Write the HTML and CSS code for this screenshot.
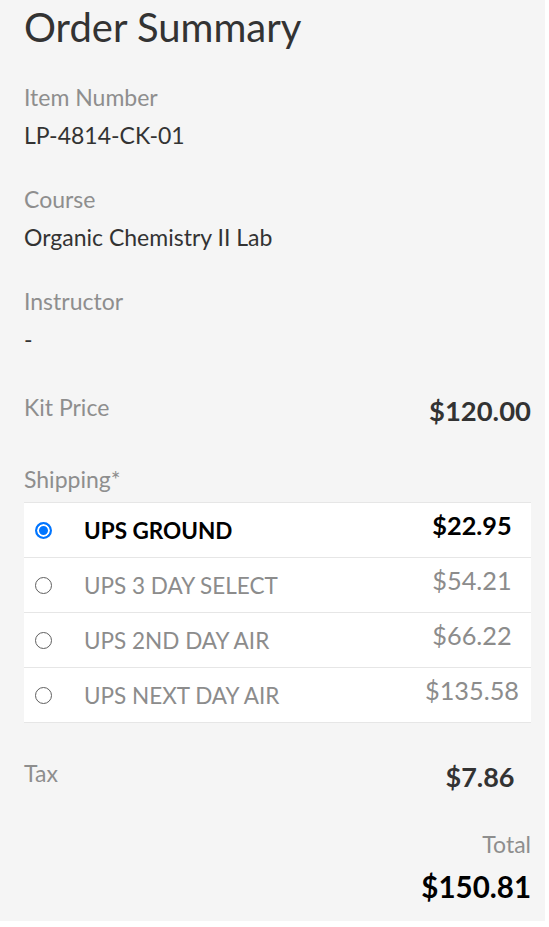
FILE: index.html
```html
<!DOCTYPE html>
<html>
<head>
<meta charset="utf-8">
<link rel="stylesheet" href="styles.css">
</head>
<body>
<div class="panel">
  <h1 class="title">Order Summary</h1>

  <div class="field first">
    <div class="label">Item Number</div>
    <div class="value">LP-4814-CK-01</div>
  </div>
  <div class="field">
    <div class="label">Course</div>
    <div class="value">Organic Chemistry II Lab</div>
  </div>
  <div class="field">
    <div class="label">Instructor</div>
    <div class="value">-</div>
  </div>

  <div class="line kit">
    <div class="label">Kit Price</div>
    <div class="amount">$120.00</div>
  </div>

  <div class="label shipping-label">Shipping*</div>
  <div class="options">
    <label class="option selected">
      <input type="radio" name="ship" checked>
      <span class="opt-name">UPS GROUND</span>
      <span class="opt-price">$22.95</span>
    </label>
    <label class="option">
      <input type="radio" name="ship">
      <span class="opt-name">UPS 3 DAY SELECT</span>
      <span class="opt-price">$54.21</span>
    </label>
    <label class="option">
      <input type="radio" name="ship">
      <span class="opt-name">UPS 2ND DAY AIR</span>
      <span class="opt-price">$66.22</span>
    </label>
    <label class="option">
      <input type="radio" name="ship">
      <span class="opt-name">UPS NEXT DAY AIR</span>
      <span class="opt-price">$135.58</span>
    </label>
  </div>

  <div class="line tax">
    <div class="label">Tax</div>
    <div class="amount">$7.86</div>
  </div>

  <div class="total">
    <div class="label">Total</div>
    <div class="total-amount">$150.81</div>
  </div>
</div>
</body>
</html>
```

FILE: styles.css
```css
html, body {
  margin: 0;
  padding: 0;
  background: #ffffff;
}
body {
  font-family: Lato, "Open Sans", sans-serif;
}
.panel {
  width: 545px;
  height: 921px;
  box-sizing: border-box;
  background: #f5f5f5;
  padding: 0 14px 0 24px;
  display: flex;
  flex-direction: column;
}
.title {
  margin: 4px 0 0 0;
  font-size: 40px;
  font-weight: 400;
  line-height: 46px;
  color: #333333;
}
.field {
  margin-top: 34px;
}
.field.first {
  margin-top: 32px;
}
.label {
  font-size: 23px;
  line-height: 30px;
  color: #8e8e8e;
}
.value {
  margin-top: 8px;
  font-size: 23px;
  line-height: 30px;
  color: #333333;
}
.line {
  display: flex;
  justify-content: space-between;
  align-items: flex-start;
}
.kit {
  margin-top: 38px;
}
.amount {
  width: 102px;
  text-align: center;
  font-size: 27px;
  font-weight: 700;
  line-height: 38px;
  color: #333333;
}
.kit .amount {
  font-size: 27.4px;
}
.shipping-label {
  margin-top: 34px;
}
.options {
  margin-top: 8px;
  background: #ffffff;
  border-top: 1px solid #e6e6e6;
}
.option {
  display: flex;
  align-items: center;
  height: 54px;
  border-bottom: 1px solid #e6e6e6;
  padding: 0 9px 0 11px;
}
.option input {
  appearance: none;
  -webkit-appearance: none;
  box-sizing: border-box;
  width: 17px;
  height: 17px;
  margin: 0;
  flex: none;
  border-radius: 50%;
  border: 1.5px solid #5f5f5f;
  background: #ffffff;
}
.option input:checked {
  border: 2.5px solid #0075ff;
  background: #0075ff;
  box-shadow: inset 0 0 0 2px #ffffff;
}
.opt-name {
  margin-left: 32px;
  font-size: 22.5px;
  color: #8c8c8c;
  flex: 1;
}
.opt-price {
  width: 100px;
  text-align: center;
  font-size: 25.3px;
  color: #8c8c8c;
  padding-bottom: 10px;
}
.selected .opt-name {
  color: #000000;
  font-weight: 700;
}
.selected .opt-price {
  color: #000000;
  font-weight: 700;
}
.tax {
  margin-top: 35px;
}
.total {
  margin-top: 33px;
  display: flex;
  flex-direction: column;
  align-items: flex-end;
}
.total-amount {
  margin-top: 8px;
  font-size: 29.5px;
  font-weight: 700;
  line-height: 40px;
  color: #000000;
}
```
